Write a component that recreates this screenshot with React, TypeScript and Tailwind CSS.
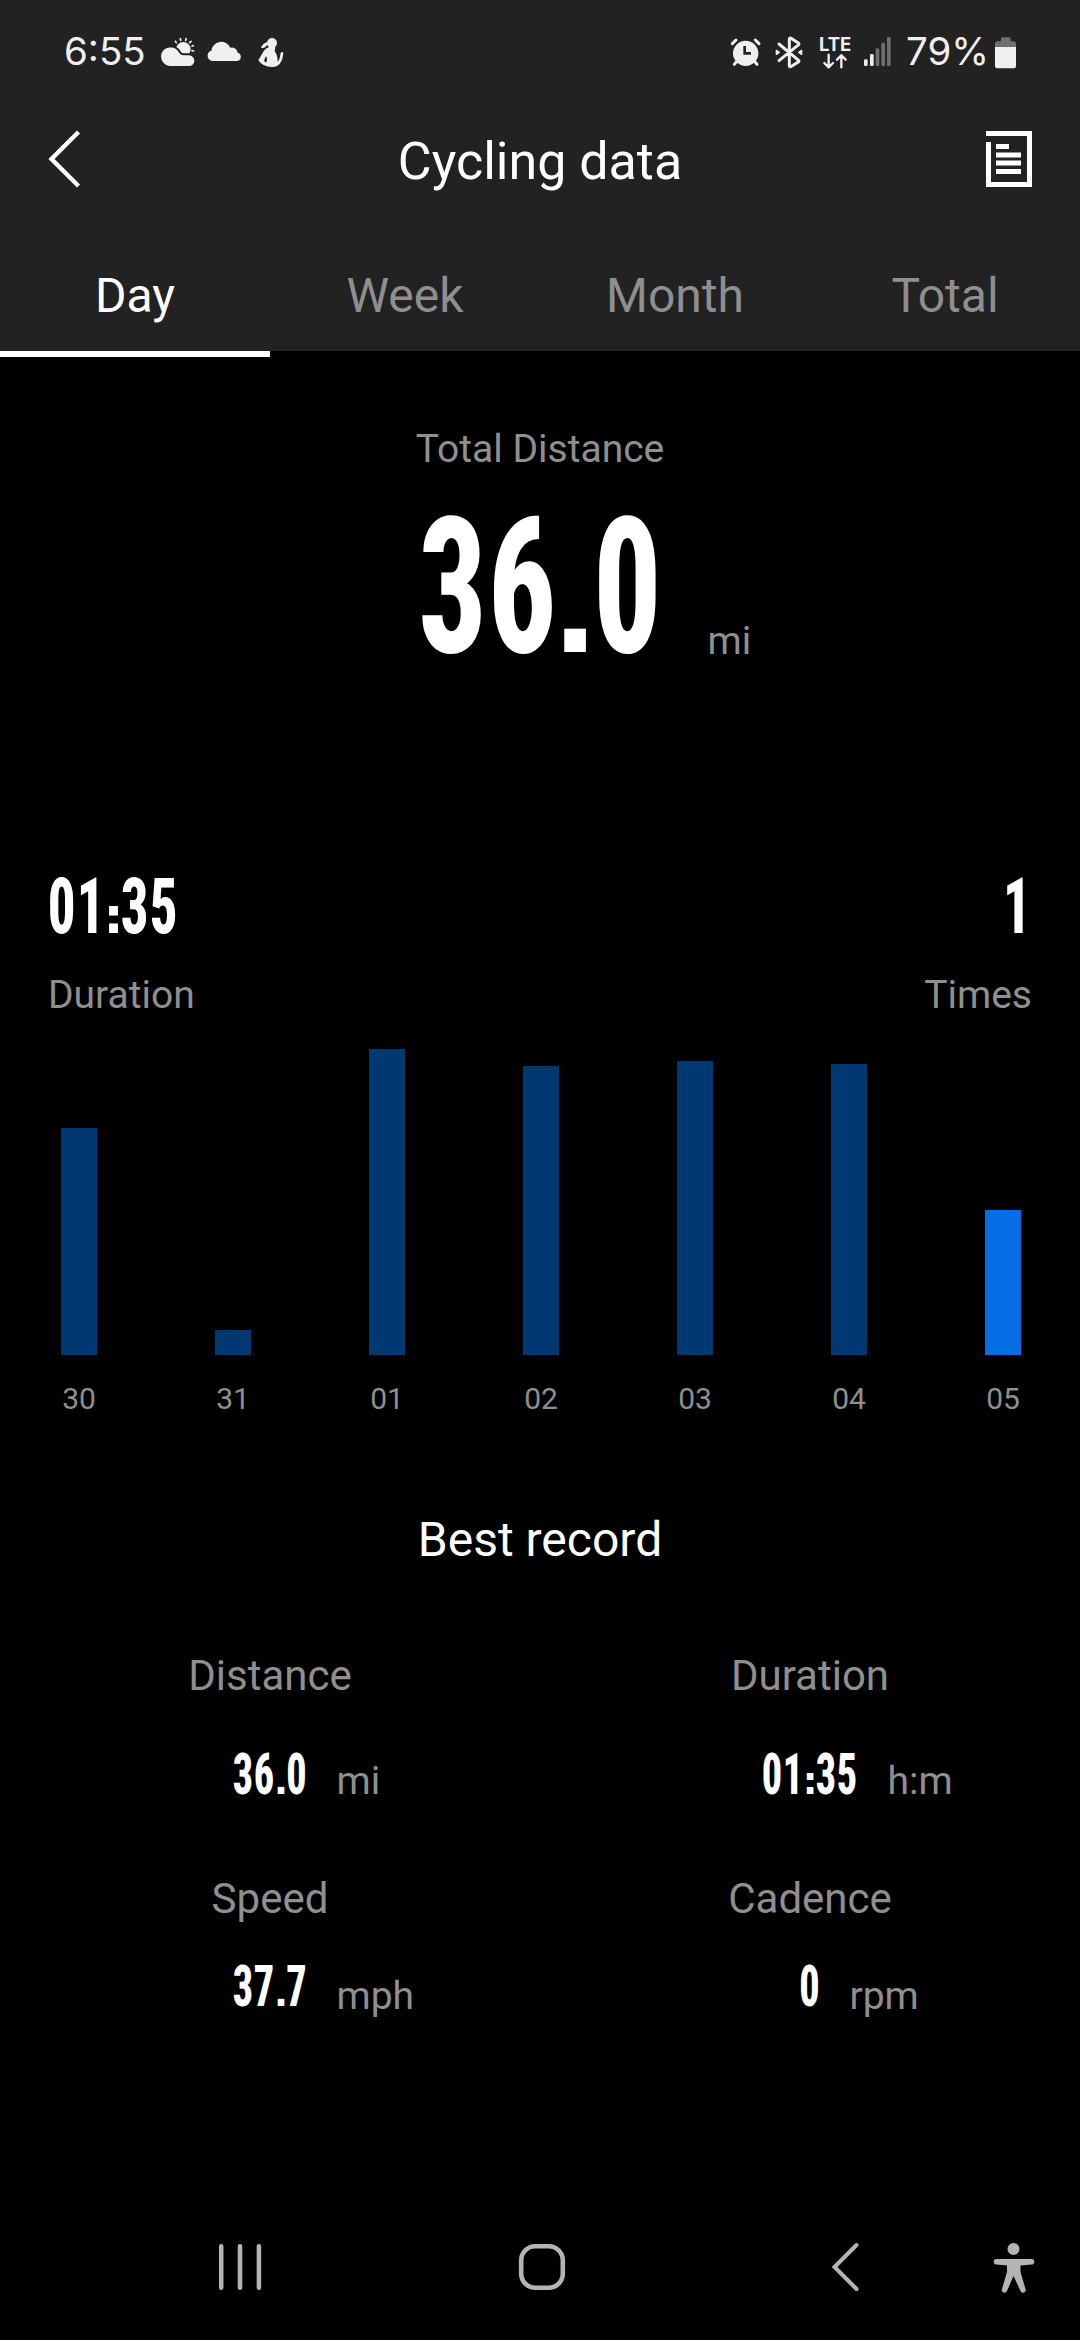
import React, { useState } from "react";

const tabs = ["Day", "Week", "Month", "Total"];

const days = [
    { label: "30", height: 227 },
    { label: "31", height: 25 },
    { label: "01", height: 306 },
    { label: "02", height: 289 },
    { label: "03", height: 294 },
    { label: "04", height: 291 },
    { label: "05", height: 145 },
];

const sizes = {
    lg: { box: "h-[160px] leading-[160px] text-[189px] tracking-[0.01em]", digits: { 1: "w-[70px]", 2: "w-[140px]" }, mark: "w-[35px]" },
    md: { box: "h-[76px] leading-[76px] text-[77px] tracking-[0.02em]", digits: { 1: "w-[29px]", 2: "w-[58px]" }, mark: "w-[15px]" },
    sm: { box: "h-[56px] leading-[56px] text-[56.5px] tracking-[0.02em]", digits: { 1: "w-[21px]", 2: "w-[43px]" }, mark: "w-[11px]" },
};

// Narrow digits with square dots: every run is squeezed inside a box of its final width
const Digits = ({ value, size }: { value: string; size: keyof typeof sizes }) => {
    const { box, digits, mark } = sizes[size];
    return (
        <div className={`flex items-baseline whitespace-nowrap font-['Roboto_Condensed',sans-serif] font-extrabold text-white ${box}`}>
            {value.split(/([.:])/).map((run, index) =>
                /\d/.test(run) ? (
                    <span key={index} className={`flex justify-center ${run.length === 1 ? digits[1] : digits[2]}`}>
                        <span className="scale-x-[0.71]">{run}</span>
                    </span>
                ) : (
                    <span key={index} className={`flex justify-center font-['DejaVu_Sans',sans-serif] font-bold tracking-normal ${mark}`}>
                        <span className="text-[0.65em]">{run}</span>
                    </span>
                )
            )}
        </div>
    );
};

const StatusBar = () => (
    <div className="flex h-[104px] items-center pl-[64px] pr-[63px] font-['Inter',sans-serif] text-[38.5px] text-[#efefef]">
        <span className="w-[96px]">6:55</span>
        <svg viewBox="360 45 375 102" className="h-[34px] w-[125px]" fill="#efefef">
            <circle cx="430" cy="88" r="22" />
            <path d="M406 64l3 4M421 56l1 5M438 56l-1 5M453 64l-4 4M460 77l-4 1M461 93l-5-1" stroke="#efefef" strokeWidth="5" strokeLinecap="round" />
            <path d="M388 138a27 30 0 0 1-25-30a29 29 0 0 1 55-9q4 7 12 7h17a16 16 0 0 1 0 32z" stroke="#222" strokeWidth="12" paintOrder="stroke" />
            <path d="M516 123a16 16 0 0 1-2-31a30 30 0 0 1 57-9a18 18 0 0 1 22 15a13 13 0 0 1 0 25z" />
            <circle cx="696" cy="69" r="15" />
            <path d="M686 66q-18 2-23 17q10 4 15-4q4-6 12-5z" />
            <path d="M689 80q-14 4-21 18l-13 23q14 21 43 20q29-2 32-43q-7-5-9 5q-1 16-8 22q0-21-9-31l2-13z" />
            <path d="M678 108l-6 14l6 6q6-9 0-20z" fill="#222" />
        </svg>
        <svg viewBox="60 45 489 105" className="ml-auto h-[35px] w-[163px] overflow-visible" fill="#efefef">
            <circle cx="107" cy="100" r="38" />
            <g stroke="#efefef" strokeWidth="9" strokeLinecap="round" strokeLinejoin="round" fill="none">
                <path d="M67 71l11-11M136 60l11 11M79 126l-6 7M135 126l6 7" />
                <path d="M207 72l59 49q2 2 0 4l-24 15q-4 1-4-3V57q0-4 4-3l24 16q2 2 0 4l-59 48" />
                <path d="M356 104v37M343 129l13 13l13-13M394 142v-36M381 119l13-13l13 13" strokeWidth="7" />
            </g>
            <path d="M104 78v22h19" stroke="#222" strokeWidth="8" fill="none" />
            <path d="M199 91l9 6l-9 6zM275 91l-9 6l9 6z" stroke="#efefef" strokeWidth="4" strokeLinejoin="round" />
            <text x="327" y="92" fontSize="57" fontWeight="700" textLength="97" lengthAdjust="spacingAndGlyphs">LTE</text>
            <rect x="462" y="118" width="11" height="20" rx="4" />
            <rect x="480" y="102" width="11" height="36" rx="4" />
            <g fill="#6f6f6f">
                <rect x="497" y="85" width="11" height="53" rx="4" />
                <rect x="514" y="68" width="11" height="70" rx="4" />
                <rect x="531" y="51" width="11" height="87" rx="4" />
            </g>
        </svg>
        <span className="ml-[13px] w-[88px]">79%</span>
        <svg viewBox="852 45 69 99" className="h-[33px] w-[23px]">
            <path d="M855 80V68q0-7 7-7h11v-7q0-5 5-5h19q5 0 5 5v7h9q7 0 7 7v12z" fill="#6f6f6f" />
            <path d="M855 78h63v56q0 8-8 8h-47q-8 0-8-8z" fill="#efefef" />
        </svg>
    </div>
);

const BestRecord = ({ title, value, unit, row }: { title: string; value: string; unit: string; row: number }) => (
    <div className="text-center">
        <h3 className="text-[42px] leading-[48px]">{title}</h3>
        <div className={`grid grid-cols-[1fr_auto_1fr] items-end ${row === 0 ? "mt-[47px]" : "mt-[36px]"}`}>
            <span />
            <Digits value={value} size="sm" />
            <span className={`ml-[29px] text-left text-[39px] leading-[48px] ${row === 0 ? "-mb-[2px]" : "-mb-[5px]"}`}>{unit}</span>
        </div>
    </div>
);

const NavigationBar = () => (
    <nav className="mt-auto flex h-[146px] items-center pl-[218px] text-[#b4b4b4]">
        <svg viewBox="0 0 44 48" className="h-[48px] w-[44px]" stroke="currentColor" strokeWidth="4.5" strokeLinecap="round">
            <path d="M3.2 3.3v41.4M22 3.3v41.4M40.9 3.3v41.4" />
        </svg>
        <svg viewBox="0 0 48 48" className="ml-[256px] h-[48px] w-[48px]" fill="none" stroke="currentColor" strokeWidth="4.6">
            <rect x="3.2" y="3.2" width="41.6" height="41.6" rx="14" />
        </svg>
        <svg viewBox="0 0 30 50" className="ml-[264px] h-[50px] w-[30px]" fill="none" stroke="currentColor" strokeWidth="4" strokeLinecap="round">
            <path d="M26.5 3L4.5 25L26.5 47" />
        </svg>
        <svg viewBox="0 0 42 52" className="ml-[133px] h-[52px] w-[42px]" fill="currentColor">
            <circle cx="20.5" cy="8" r="6" />
            <path d="M3.5 18H38.5a2.8 2.8 0 0 1 0 5.6L27.5 24.5V31L32.5 48a2.6 2.6 0 0 1-5 2L20.5 35L14 50a2.6 2.6 0 0 1-5-2L14 31V24.5L3.5 23.6a2.8 2.8 0 0 1 0-5.6z" />
        </svg>
    </nav>
);

export default function App() {
    const [activeTab, setActiveTab] = useState("Day");

    return (
        <div className="flex h-[2340px] w-[1080px] flex-col overflow-hidden bg-black font-['Roboto',sans-serif] text-[#8f8f8f]">
            <header className="bg-[#222222]">
                <StatusBar />
                <div className="flex h-[114px] items-center justify-between px-[48px] text-white">
                    <svg viewBox="0 0 46 58" className="mb-[4px] h-[58px] w-[46px]" fill="none" stroke="currentColor" strokeWidth="4.4">
                        <path d="M30.5 2L3.5 29L30.5 56" />
                    </svg>
                    <h1 className="pt-[2px] text-[52px] leading-[60px]">Cycling data</h1>
                    <svg viewBox="0 0 46 56" className="mb-[4px] h-[56px] w-[46px]" fill="none" stroke="currentColor" strokeWidth="5">
                        <path d="M0 2.5H43.5V53.5H2.5V11M10 15.5H23M10 24H35M10 32H35M10 40.5H35" />
                    </svg>
                </div>
                <div className="grid h-[133px] grid-cols-4">
                    {tabs.map((tab) => (
                        <button
                            key={tab}
                            onClick={() => setActiveTab(tab)}
                            className={`relative flex justify-center pt-[50px] text-[48px] leading-[56px] ${tab === activeTab ? "text-white" : ""}`}
                        >
                            {tab}
                            {tab === activeTab && <span className="absolute inset-x-0 -bottom-[6px] h-[6px] bg-white" />}
                        </button>
                    ))}
                </div>
            </header>

            <section className="pt-[74px] text-[39px] leading-[48px]">
                <p className="text-center">Total Distance</p>
                <div className="mt-[35px] grid grid-cols-[1fr_auto_1fr] items-end">
                    <span />
                    <Digits value="36.0" size="lg" />
                    <span className="mb-[3px] ml-[45px]">mi</span>
                </div>
                <div className="mt-[201px] flex justify-between px-[48px]">
                    <div>
                        <Digits value="01:35" size="md" />
                        <p className="mt-[26px]">Duration</p>
                    </div>
                    <div className="flex flex-col items-end">
                        <Digits value="1" size="md" />
                        <p className="mt-[26px]">Times</p>
                    </div>
                </div>
            </section>

            <section className="grid grid-cols-[repeat(7,154px)] pl-[2px]">
                {days.map((day, index) => (
                    <div key={day.label} className="flex flex-col items-center">
                        <div className="flex h-[336px] items-end">
                            <div
                                className={`w-[36px] ${index === days.length - 1 ? "bg-[#056ee5]" : "bg-[#003872]"}`}
                                style={{ height: day.height }}
                            />
                        </div>
                        <span className="mt-[24px] text-[30px] leading-[40px]">{day.label}</span>
                    </div>
                ))}
            </section>

            <section>
                <h2 className="mt-[93px] text-center text-[48px] leading-[56px] text-white">Best record</h2>
                <div className="mt-[84px] grid grid-cols-2 gap-y-[72px]">
                    <BestRecord title="Distance" value="36.0" unit="mi" row={0} />
                    <BestRecord title="Duration" value="01:35" unit="h:m" row={0} />
                    <BestRecord title="Speed" value="37.7" unit="mph" row={1} />
                    <BestRecord title="Cadence" value="0" unit="rpm" row={1} />
                </div>
            </section>

            <NavigationBar />
        </div>
    );
}
